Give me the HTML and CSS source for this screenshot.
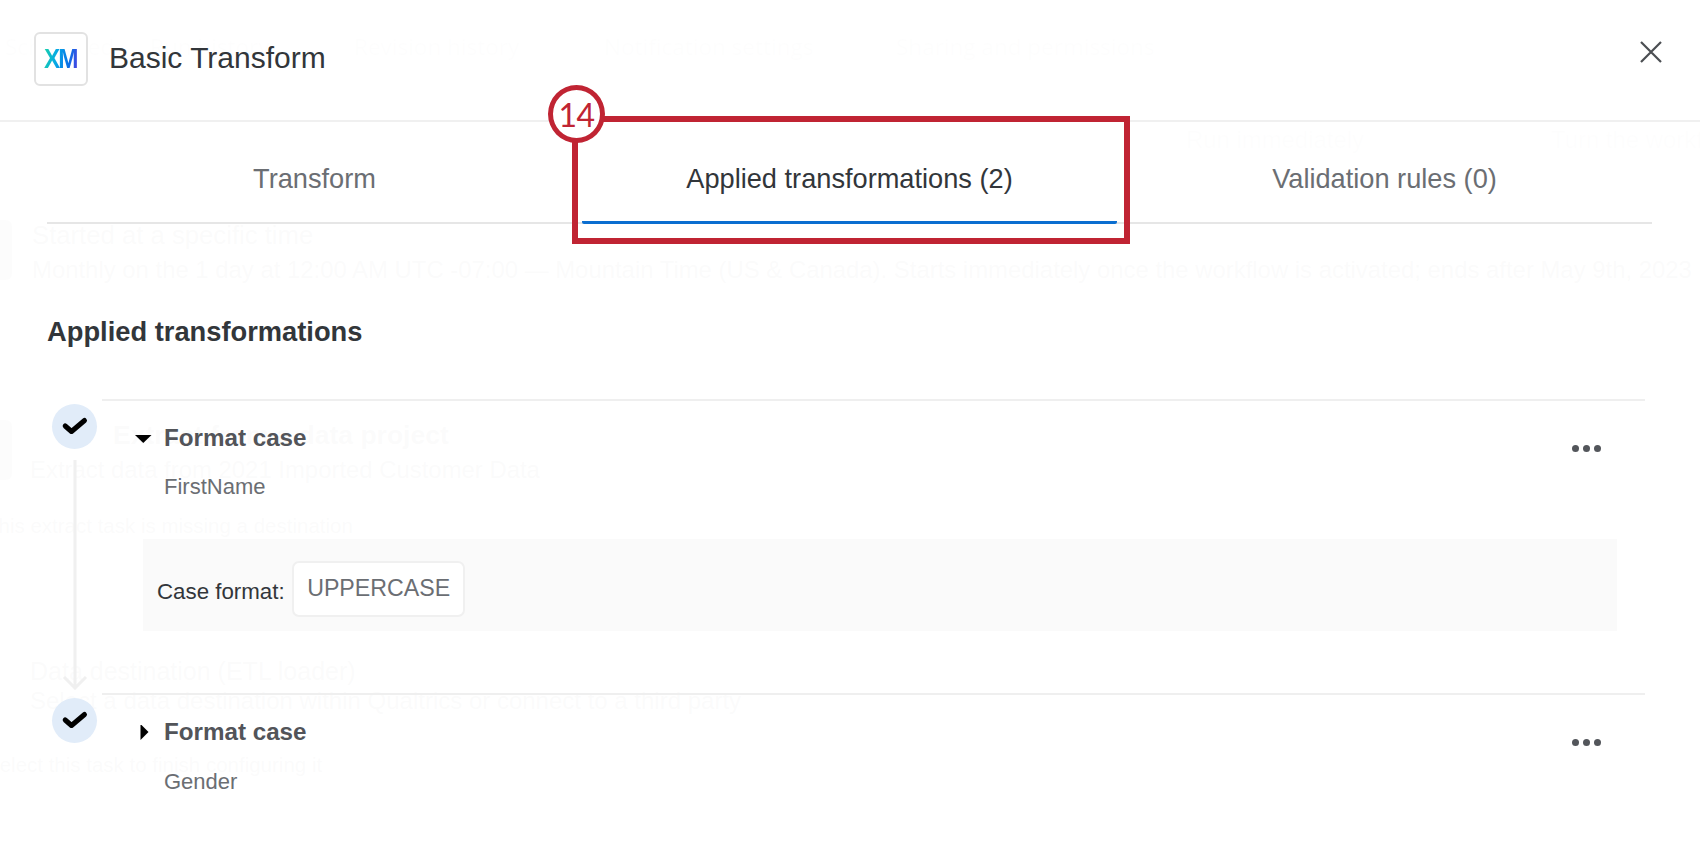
FILE: index.html
```html
<!DOCTYPE html>
<html lang="en">
<head>
<meta charset="utf-8">
<title>Basic Transform</title>
<link rel="stylesheet" href="styles.css">
</head>
<body>
<div class="ghost">
  <div class="g-nav">
    <span class="g-nav-a">Scheduled</span>
    <span class="g-nav-b">Run history</span>
    <span class="g-nav-c">Revision history</span>
    <span class="g-nav-d">Notification settings</span>
    <span class="g-nav-e">Sharing and permissions</span>
  </div>
  <div class="g-run">
    <span class="g-run-a">Run immediately</span>
    <span class="g-run-b">Turn the workflow off</span>
  </div>
  <div class="g-block g-started">
    <span class="g-box"></span>
    <div class="g-stack">
      <div class="g-line g-title">Started at a specific time</div>
      <div class="g-line g-gap">Monthly on the 1 day at 12:00 AM UTC -07:00 — Mountain Time (US &amp; Canada). Starts immediately once the workflow is activated; ends after May 9th, 2023</div>
    </div>
  </div>
  <div class="g-block g-extract">
    <span class="g-box"></span>
    <div class="g-stack g-stack-tight">
      <div class="g-line g-bold">Extract from a data project</div>
      <div class="g-line g-gap">Extract data from 2021 Imported Customer Data</div>
    </div>
  </div>
  <div class="g-line g-missing">This extract task is missing a destination</div>
  <div class="g-line g-dest">Data destination (ETL loader)</div>
  <div class="g-line g-select">Select a data destination within Qualtrics or connect to a third party</div>
  <div class="g-line g-config">Select this task to finish configuring it</div>
</div>

<div class="modal">
  <header class="header">
    <div class="logo"><span class="logo-text">XM</span></div>
    <h1 class="title">Basic Transform</h1>
    <button class="close" aria-label="Close">
      <svg class="close-icon" viewBox="0 0 24 24"><path d="M2 2 L22 22 M22 2 L2 22"/></svg>
    </button>
  </header>

  <nav class="tabs">
    <div class="tab">Transform</div>
    <div class="tab tab-active">Applied transformations (2)</div>
    <div class="tab">Validation rules (0)</div>
  </nav>

  <h2 class="heading">Applied transformations</h2>

  <div class="list">
    <div class="item">
      <div class="rail">
        <span class="circle"><svg class="check" viewBox="0 0 45 45"><path d="M13.2 22 L19.5 27.5 L32.5 16.5"/></svg></span>
        <svg class="connector" viewBox="0 0 26 230"><path d="M13 0 V228 M2 217 L13 228 L24 217"/></svg>
      </div>
      <div class="body">
        <div class="head">
          <svg class="caret" viewBox="0 0 17 17"><path d="M0 4 H16.5 L8.25 12 Z"/></svg>
          <div class="meta">
            <div class="name">Format case</div>
            <div class="sub">FirstName</div>
          </div>
          <div class="dots"><i class="dot"></i><i class="dot"></i><i class="dot"></i></div>
        </div>
        <div class="panel">
          <span class="label">Case format:</span>
          <span class="field">UPPERCASE</span>
        </div>
      </div>
    </div>
    <div class="item">
      <div class="rail">
        <span class="circle"><svg class="check" viewBox="0 0 45 45"><path d="M13.2 22 L19.5 27.5 L32.5 16.5"/></svg></span>
      </div>
      <div class="body">
        <div class="head">
          <svg class="caret" viewBox="0 0 17 17"><path d="M5.5 -1 L13.5 7 L5.5 15 Z"/></svg>
          <div class="meta">
            <div class="name">Format case</div>
            <div class="sub sub-last">Gender</div>
          </div>
          <div class="dots"><i class="dot"></i><i class="dot"></i><i class="dot"></i></div>
        </div>
      </div>
    </div>
  </div>

  <div class="callout"><span class="badge">14</span></div>
</div>
</body>
</html>
```
FILE: styles.css
```css
* { box-sizing: border-box; }

html, body {
  margin: 0;
  height: 850px;
  overflow: hidden;
  background: #fff;
  font-family: "Liberation Sans", Arial, sans-serif;
}

/* Page behind the modal, seen through the overlay */
.ghost {
  width: 1700px;
  height: 850px;
  overflow: hidden;
  color: #2c2f33;
  font-size: 23.9px;
  line-height: 30px;
  white-space: nowrap;
}

.g-nav {
  display: flex;
  height: 30px;
  margin-top: 32px;
  font-family: "Open Sans", sans-serif;
  font-size: 22.5px;
  color: #aaa;
}
.g-nav span { flex: none; }
.g-nav-a { margin-left: 5px; width: 145px; }
.g-nav-b { width: 204px; }
.g-nav-c { width: 250px; }
.g-nav-d { width: 292px; }

.g-run {
  display: flex;
  height: 30px;
  margin-top: 63px;
  padding-left: 1186px;
  color: #aaa;
}
.g-run span { flex: none; }
.g-run-a { width: 365px; }

.g-block { display: flex; align-items: flex-start; }
.g-box {
  flex: none;
  width: 12px;
  height: 60px;
  margin-right: 20px;
  background: #777;
  border-radius: 0 6px 6px 0;
}
.g-stack-tight { margin-left: -2px; }
.g-started { margin-top: 65px; }
.g-extract { margin-top: 135px; }
.g-line { height: 30px; }
.g-gap { margin-top: 5px; }
.g-title { font-size: 25.7px; }
.g-bold { font-size: 26.5px; font-weight: 700; padding-left: 83px; }
.g-missing { margin-top: 26px; margin-left: -14px; font-size: 20.5px; }
.g-dest { margin-top: 115px; margin-left: 30px; font-size: 25px; }
.g-select { margin-left: 30px; font-size: 24px; }
.g-config { margin-top: 34px; margin-left: -14px; font-size: 20.5px; }

/* Modal */
.modal {
  position: absolute;
  inset: 0;
  background: rgba(255, 255, 255, 0.982);
  color: #32363a;
}

.header {
  display: flex;
  align-items: flex-start;
  height: 122px;
  padding: 32px 37px 0 34px;
  border-bottom: 2px solid #f0f0f0;
}

.logo {
  display: flex;
  align-items: center;
  justify-content: center;
  width: 54px;
  height: 54px;
  background: #fff;
  border: 2px solid #e2e2e2;
  border-radius: 6px;
}
.logo-text {
  font-size: 27px;
  font-weight: 700;
  letter-spacing: -2px;
  padding-right: 2px;
  line-height: 27px;
  transform: scaleX(0.9);
  background: linear-gradient(100deg, #19d3a6 0%, #06a9e6 36%, #0b6fe6 70%, #5a36e0 100%);
  -webkit-background-clip: text;
  background-clip: text;
  color: transparent;
}

.title {
  margin: -1px 0 0 21px;
  font-size: 30px;
  line-height: 54px;
  font-weight: 400;
  color: #32363a;
}

.close {
  margin: 8px 0 0 auto;
  padding: 0;
  border: 0;
  background: none;
  line-height: 0;
}
.close-icon {
  width: 24px;
  height: 24px;
  fill: none;
  stroke: #4b4e52;
  stroke-width: 2.2;
}

.tabs {
  display: flex;
  height: 102px;
  margin: 0 48px 0 47px;
  border-bottom: 2px solid #e6e6e6;
}
.tab {
  flex: 1;
  height: 102px;
  padding-top: 42px;
  font-size: 27.2px;
  line-height: 30px;
  text-align: center;
  color: #6b6e73;
}
.tab-active {
  color: #32363a;
  border-bottom: 3px solid #0b6ed0;
  border-radius: 0 0 2px 2px;
}

.heading {
  margin: 92px 0 0 47px;
  font-size: 27.3px;
  line-height: 32px;
  font-weight: 700;
  color: #32363a;
}

.list { margin: 51px 55px 0 47px; }

.item { display: flex; }
.rail {
  flex: none;
  display: flex;
  flex-direction: column;
  width: 55px;
}
.circle {
  display: block;
  width: 45px;
  height: 45px;
  margin: 5px 0 0 5px;
  border-radius: 50%;
  background: #e1ecf9;
}
.check {
  display: block;
  width: 45px;
  height: 45px;
  fill: none;
  stroke: #000;
  stroke-width: 5;
  stroke-linecap: round;
  stroke-linejoin: round;
}
.connector {
  width: 26px;
  height: 230px;
  margin: 11px 0 0 14.5px;
  fill: none;
  stroke: #f0f0f0;
  stroke-width: 3;
}

.body {
  flex: 1;
  min-width: 0;
  padding-top: 22px;
  border-top: 2px solid #efefef;
}
.head { display: flex; align-items: flex-start; }
.caret {
  flex: none;
  width: 17px;
  height: 17px;
  margin: 8px 12px 0 33px;
  fill: #000;
}
.name {
  font-size: 24.2px;
  line-height: 30px;
  font-weight: 700;
  color: #525459;
}
.sub {
  margin-top: 19px;
  font-size: 22px;
  line-height: 30px;
  color: #6b6e73;
}
.sub-last { margin-top: 20px; }
.dots {
  display: flex;
  gap: 4px;
  margin: 22px 44px 0 auto;
}
.dot {
  display: block;
  width: 7px;
  height: 7px;
  border-radius: 50%;
  background: #53565b;
}

.panel {
  display: flex;
  align-items: flex-start;
  height: 92px;
  margin: 37px 28px 62px 41px;
  padding: 22px 0 0 14px;
  background: #fafafa;
}
.label {
  margin-top: 16px;
  font-size: 22.3px;
  line-height: 30px;
  color: #32363a;
}
.field {
  display: flex;
  align-items: center;
  height: 56px;
  margin-left: 7.5px;
  padding: 0 13px 2px;
  background: #fff;
  border: 2px solid #f0f0f0;
  border-radius: 7px;
  font-size: 23.2px;
  color: #6b6e73;
}

/* Red annotation over the active tab */
.callout {
  position: absolute;
  left: 572px;
  top: 116px;
  width: 558px;
  height: 128px;
  border: 6px solid #c02433;
}
.badge {
  position: absolute;
  left: -30px;
  top: -37px;
  display: flex;
  align-items: center;
  justify-content: center;
  width: 57px;
  height: 58px;
  background: #fff;
  border: 5.5px solid #c02433;
  border-radius: 50%;
  font-family: Lato, sans-serif;
  font-size: 32px;
  letter-spacing: -0.5px;
  color: #c02433;
}
```
